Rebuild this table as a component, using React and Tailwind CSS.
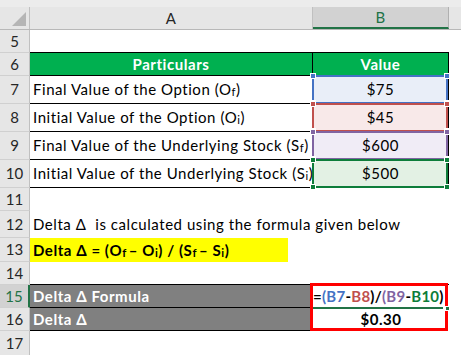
import React from "react";

function Handles({ color, bottom = true }) {
  const sq = "absolute w-[6px] h-[6px] border border-white " + color;
  return (
    <>
      <div className={sq + " -left-[4px] -top-[4px]"} />
      <div className={sq + " -right-[4px] -top-[4px]"} />
      {bottom && <div className={sq + " -left-[4px] -bottom-[4px]"} />}
      {bottom && <div className={sq + " -right-[4px] -bottom-[4px]"} />}
    </>
  );
}

function RH({ n, sel = false }) {
  return (
    <div
      className={
        "w-[30px] shrink-0 flex items-center justify-center border-b border-[#d0d0d0] tracking-normal " +
        (sel
          ? "bg-[#d2d2d2] text-[#217346] border-r-2 border-r-[#217346]"
          : "bg-[#e6e6e6] text-[#262626] border-r border-r-[#c0c0c0]")
      }
    >
      {n}
    </div>
  );
}

export default function App() {
  return (
    <div className="w-[461px] h-[355px] overflow-hidden bg-white font-[Lato,sans-serif] text-[15px] tracking-[0.55px] text-black leading-none">
      {/* column header */}
      <div className="relative">
        <div className="h-[7px] bg-[#ececec]" />
        <div className="flex h-[23px] bg-[#e6e6e6] border-b border-[#b8b8b8]">
          <div className="w-[30px] shrink-0 border-r border-[#c0c0c0]" />
          <div className="w-[283px] shrink-0 flex items-center justify-center border-r border-[#c0c0c0] text-[#262626]">
            A
          </div>
          <div className="w-[136px] shrink-0 flex items-center justify-center bg-[#d2d2d2] border-b-2 border-b-[#217346] border-r border-r-[#b0b0b0] text-[#217346]">
            B
          </div>
          <div className="flex-1" />
        </div>
        <svg className="absolute left-[11px] top-[11px]" width="16" height="16" viewBox="0 0 16 16">
          <polygon points="1,15 15,15 15,1" fill="#b5b5b5" />
        </svg>
      </div>

      {/* row 5 */}
      <div className="flex h-[23px]">
        <RH n="5" />
        <div className="w-[283px] shrink-0 border-b border-black" />
        <div className="w-[136px] shrink-0 border-b border-black" />
      </div>

      {/* row 6 */}
      <div className="flex h-[23px]">
        <RH n="6" />
        <div className="w-[283px] shrink-0 bg-[#00b050] border-r border-b border-black flex items-center justify-center font-bold text-white">
          Particulars
        </div>
        <div className="w-[136px] shrink-0 bg-[#00b050] border-r border-b border-black flex items-center justify-center font-bold text-white">
          Value
        </div>
      </div>

      {/* row 7 */}
      <div className="flex h-[28px]">
        <RH n="7" />
        <div className="w-[283px] shrink-0 border-r border-b border-black flex items-center pl-[3px] whitespace-nowrap">
          Final Value of the Option (O<sub>f</sub>)
        </div>
        <div className="relative w-[136px] shrink-0 bg-[#e9eef8] border-r border-b border-black flex items-center justify-center">
          $75
          <div className="absolute -left-[1px] right-0 -top-[1px] -bottom-[1px] border-2 border-[#4472c4]">
            <Handles color="bg-[#4472c4]" />
          </div>
        </div>
      </div>

      {/* row 8 */}
      <div className="flex h-[28px]">
        <RH n="8" />
        <div className="w-[283px] shrink-0 border-r border-b border-black flex items-center pl-[3px] whitespace-nowrap">
          Initial Value of the Option (O<sub>i</sub>)
        </div>
        <div className="relative w-[136px] shrink-0 bg-[#f8e9e9] border-r border-b border-black flex items-center justify-center">
          $45
          <div className="absolute -left-[1px] right-0 -top-[1px] -bottom-[1px] border-2 border-[#c0504d]">
            <Handles color="bg-[#c0504d]" />
          </div>
        </div>
      </div>

      {/* row 9 */}
      <div className="flex h-[28px]">
        <RH n="9" />
        <div className="w-[283px] shrink-0 border-r border-b border-black flex items-center pl-[3px] whitespace-nowrap">
          Final Value of the Underlying Stock (S<sub>f</sub>)
        </div>
        <div className="relative w-[136px] shrink-0 bg-[#f0ecf6] border-r border-b border-black flex items-center justify-center">
          $600
          <div className="absolute -left-[1px] right-0 -top-[1px] -bottom-[1px] border-2 border-[#8064a2]">
            <Handles color="bg-[#8064a2]" />
          </div>
        </div>
      </div>

      {/* row 10 */}
      <div className="flex h-[28px]">
        <RH n="10" />
        <div className="w-[283px] shrink-0 border-r border-b border-black flex items-center pl-[3px] whitespace-nowrap">
          Initial Value of the Underlying Stock (S<sub>i</sub>)
        </div>
        <div className="relative w-[136px] shrink-0 bg-[#e3f1e4] border-r border-b border-black flex items-center justify-center">
          $500
          <div className="absolute -left-[1px] right-0 -top-[1px] -bottom-[1px] border-2 border-[#0d7d3a]">
            <Handles color="bg-[#0d7d3a]" />
          </div>
        </div>
      </div>

      {/* row 11 */}
      <div className="flex h-[23px]">
        <RH n="11" />
      </div>

      {/* row 12 */}
      <div className="flex h-[27px]">
        <RH n="12" />
        <div className="flex items-center pl-[3px] whitespace-nowrap">
          Delta Δ&nbsp; is calculated using the formula given below
        </div>
      </div>

      {/* row 13 */}
      <div className="flex h-[24px]">
        <RH n="13" />
        <div className="w-[258px] shrink-0 bg-[#ffff00] flex items-center pl-[3px] whitespace-nowrap font-bold">
          Delta Δ = (O<sub className="mr-[2px]">f</sub> – O<sub>i</sub>) / (S<sub className="mr-[2px]">f</sub> – S<sub>i</sub>)
        </div>
      </div>

      {/* row 14 */}
      <div className="flex h-[23px]">
        <RH n="14" />
        <div className="w-[283px] shrink-0 border-b border-black" />
        <div className="w-[136px] shrink-0 border-b border-black" />
      </div>

      {/* row 15 */}
      <div className="flex h-[23px]">
        <RH n="15" sel />
        <div className="w-[283px] shrink-0 bg-[#808080] border-r border-b border-black flex items-center pl-[3px] font-bold text-white whitespace-nowrap">
          Delta Δ Formula
        </div>
        <div className="relative w-[136px] shrink-0 flex items-center whitespace-nowrap font-bold tracking-[0.25px]">
          <span>
            =<span className="text-[#4472c4]">(B7</span>-<span className="text-[#c0504d]">B8</span>)/<span className="text-[#8064a2]">(B9</span>-<span className="text-[#0d7d3a]">B10</span>)
          </span>
          <div className="absolute left-0 w-[130px] -bottom-[1px] h-[2px] bg-[#217346]" />
          <div className="absolute left-[132px] -bottom-[3px] w-[5px] h-[5px] bg-[#217346] border border-white z-10" />
          <div className="absolute -left-[3px] -top-[2px] w-[138px] h-[48px] border-[3px] border-[#ff0000]" />
        </div>
      </div>

      {/* row 16 */}
      <div className="flex h-[23px]">
        <RH n="16" />
        <div className="w-[283px] shrink-0 bg-[#808080] border-r border-b border-black flex items-center pl-[3px] font-bold text-white whitespace-nowrap">
          Delta Δ
        </div>
        <div className="w-[136px] shrink-0 flex items-center justify-center font-bold">
          $0.30
        </div>
      </div>

      {/* row 17 */}
      <div className="flex h-[25px]">
        <RH n="17" />
      </div>
    </div>
  );
}
